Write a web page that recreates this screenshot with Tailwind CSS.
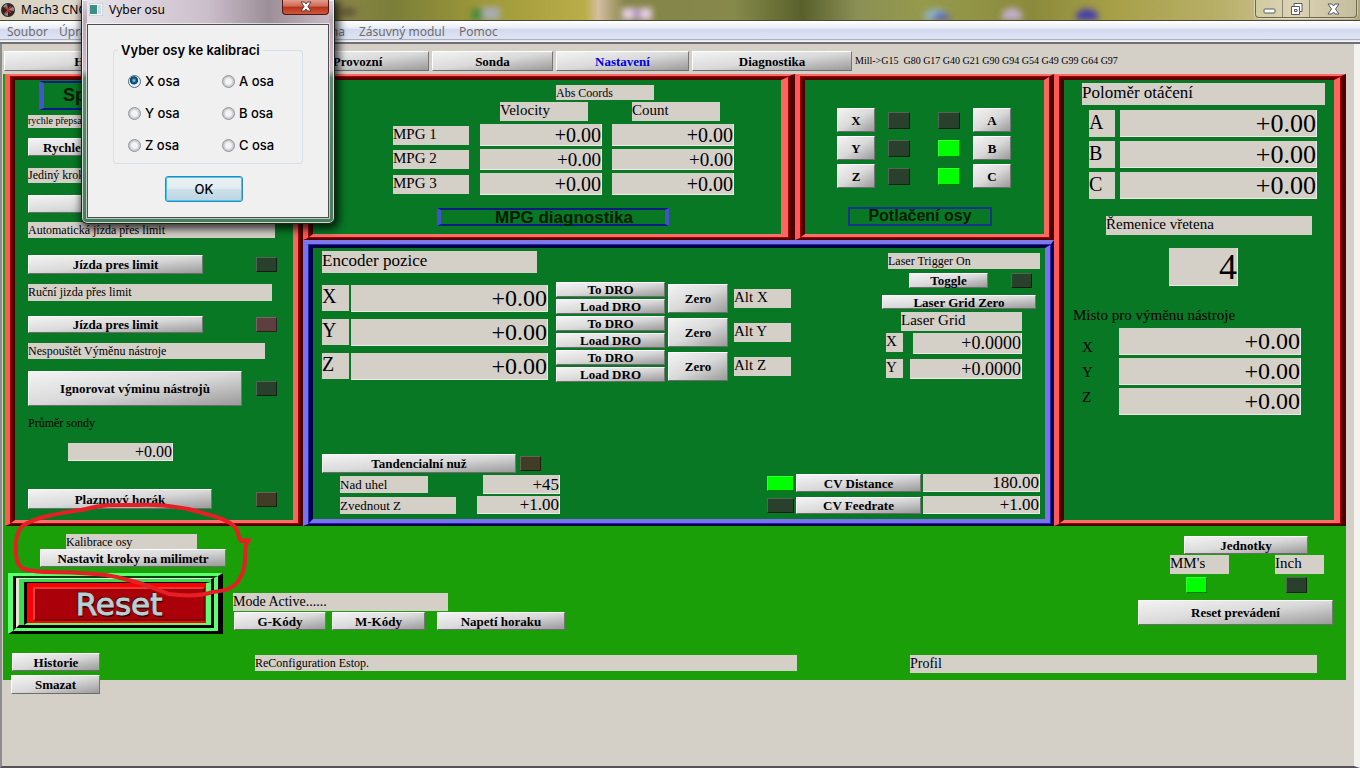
<!DOCTYPE html>
<html lang="cs">
<head>
  <meta charset="UTF-8">
  <meta name="viewport" content="width=device-width, initial-scale=1.0">
  <title>Mach3 CNC</title>
  <script src="https://cdn.jsdelivr.net/npm/@tailwindcss/browser@4"></script>
</head>
<body class="relative min-h-screen flex flex-col overflow-hidden bg-[#d4d0c8] text-black font-['Liberation_Serif',serif]">
  <!-- Title bar -->
  <header class="relative h-[21px] shrink-0 flex items-center overflow-hidden border-b border-[#4a4836] bg-[linear-gradient(90deg,#d6d0bd_0,#e0d9cf_6%,#a59a95_18%,#8a8448_25%,#7b7f38_29%,#a09a3a_36%,#b9ad48_43%,#d5bda0_44%,#858549_46%,#85894a_54%,#59602a_59%,#8a8f55_63%,#969a4c_68%,#8b8a3c_76%,#a7a048_82%,#b9b06a_90%,#cfc49c_95%,#b0a67c_100%)]">
    <svg class="ml-px size-[14px] shrink-0" viewBox="0 0 14 14"><circle cx="7" cy="7" r="7" fill="#2a2626"/><path d="M7 7 2 3.500A6 6 0 0 1 6 1zM7 7l5-3.500A6 6 0 0 1 13 8zM7 7v6a6 6 0 0 1-4-2z" fill="#8d8a86"/><path d="M4 4l6 6M10 3 5 10" stroke="#c22b22" stroke-width="1.500"/></svg>
    <h1 class="ml-[6px] whitespace-nowrap font-['Noto_Sans',sans-serif] text-[12px] leading-none">Mach3 CNC</h1>
    <svg class="absolute inset-y-0 left-[340px] h-[20px] w-[800px] blur-[3px]" viewBox="0 0 800 20">
      <ellipse cx="8" cy="12" rx="9" ry="4" fill="#5c5438"/>
      <rect x="132" y="9" width="9" height="11" fill="#3f8a3c"/><rect x="142" y="7" width="18" height="13" fill="#a8acb4"/>
      <rect x="282" y="8" width="30" height="12" fill="#e6cfe4"/><rect x="294" y="9" width="6" height="11" fill="#a88ab4"/>
      <ellipse cx="596" cy="17" rx="12" ry="8" fill="#8db2cf"/><ellipse cx="602" cy="19" rx="8" ry="6" fill="#5a63bb"/>
      <ellipse cx="672" cy="16" rx="10" ry="8" fill="#c2aed0"/>
      <ellipse cx="747" cy="17" rx="11" ry="8" fill="#443bb0"/>
    </svg>
    <div class="absolute top-0 right-[3px] h-[18px] flex rounded-b-[4px] border border-t-0 border-[#6c6750] bg-white/25 shadow-[0_0_0_1px_rgba(255,255,255,0.4)]">
      <button aria-label="Minimalizovat" class="w-[27px] border-r border-[#8d886d]"><svg class="mx-auto" width="15" height="14" viewBox="0 0 15 14"><rect x="2" y="7" width="11" height="4" rx="1" fill="#fff" stroke="#555a66"/></svg></button>
      <button aria-label="Obnovit" class="w-[27px] border-r border-[#8d886d]"><svg class="mx-auto" width="15" height="14" viewBox="0 0 15 14"><path d="M5 1.500h8v8h-2.500v3H2.500v-8H5z" fill="#fff" stroke="#555a66"/><path d="M5.500 7.500h2.500v2H5.500zM5 4.500h5.500v5" fill="none" stroke="#555a66"/></svg></button>
      <button aria-label="Zavřít" class="w-[46px]"><svg class="mx-auto" width="15" height="14" viewBox="0 0 15 14"><path d="M2 2h4l1.500 2L9 2h4L9.500 7l3.500 5H9L7.500 10 6 12H2l3.500-5z" fill="#fff" stroke="#555a66"/></svg></button>
    </div>
  </header>

  <!-- Menu -->
  <nav class="h-[23px] shrink-0 flex items-center whitespace-nowrap border-b-2 border-[#6f7075] bg-[linear-gradient(#fff_0,#e9edf6_35%,#d3daee_38%,#dfe4f4_85%,#a9aebb_88%,#f4f4f6_94%)] pl-[7px] font-['Noto_Sans',sans-serif] text-[12px] text-[#6d6d6d]">
    <a href="#" class="w-[52px]">Soubor</a>
    <a href="#" class="w-[88px]">Úpravy</a>
    <a href="#" class="w-[90px]">Funkce</a>
    <a href="#" class="w-[108px] text-right">Obsluha</a>
    <a href="#" class="ml-[14px]">Zásuvný modul</a>
    <a href="#" class="ml-[14px]">Pomoc</a>
  </nav>

  <div class="grow flex flex-col border-l-2 border-r-[6px] border-b-2 border-l-[#8c8c8c] border-r-[#f3f2ef] border-b-[#55525c] pr-[8px] [&_button]:border [&_button]:border-t-white [&_button]:border-l-white [&_button]:border-r-[#757575] [&_button]:border-b-[#6c6c6c] [&_button]:bg-linear-to-br [&_button]:from-[#f3f3f3] [&_button]:via-[#dadada] [&_button]:to-[#9b9b9b] [&_button]:font-bold [&_button]:text-[13px] [&_button]:leading-none [&_button]:whitespace-nowrap [&_button]:flex [&_button]:items-center [&_button]:justify-center [&_input]:block [&_input]:min-w-0 [&_input]:bg-[#d4d0c8] [&_input]:pt-px [&_input]:text-right [&_input]:leading-none [&_input]:border-r [&_input]:border-b [&_input]:border-[#eceae6] [&_input]:outline-none [&_label]:block [&_label]:bg-[#d4d0c8] [&_label]:leading-none [&_label]:whitespace-nowrap [&_i]:block [&_i]:shrink-0 [&_i]:border [&_i]:border-t-white/20 [&_i]:border-l-white/20 [&_i]:border-r-black/50 [&_i]:border-b-black/50">
    <!-- Screen tabs -->
    <div class="flex items-center gap-[3px] pt-[7px] pb-[3px] pl-[2px]">
      <button class="h-5 w-[178px]">Hlavní</button>
      <button class="h-5 w-[98px]" aria-label="MDI"></button>
      <button class="h-5 w-[143px]">Provozní</button>
      <button class="h-5 w-[121px]">Sonda</button>
      <button class="h-5 w-[133px]"><span class="text-[#0000e0]">Nastavení</span></button>
      <button class="h-5 w-[160px]">Diagnostika</button>
      <p class="text-[10px] leading-none whitespace-nowrap">Mill-&gt;G15&nbsp; G80 G17 G40 G21 G90 G94 G54 G49 G99 G64 G97</p>
    </div>

    <main class="ml-px bg-[#1b9f08]">
      <div class="grid grid-cols-[298px_minmax(0,1fr)_292px] pl-[2px]">

        <!-- Left panel -->
        <section class="border-t-2 border-l-[5px] border-r-4 border-b-2 border-t-[#ff6a66] border-l-[#fb5a58] border-r-[#4a0000] border-b-[#4a0000] bg-[#a80000] p-px">
          <div class="h-full border-t-[3px] border-l-4 border-r-[5px] border-b-[3px] border-t-[#5a0000] border-l-[#4a0000] border-r-[#fb6562] border-b-[#f4726a] bg-[#087825] pt-px pb-[11px] pl-[13px]">
            <h2 class="ml-[11px] h-[29px] w-[200px] border-2 border-l-[5px] border-[#0a1690] border-l-[#4654cc] pl-[19px] font-['Liberation_Sans',sans-serif] text-[18px] leading-[24px] font-bold text-[#001c02]">Sp</h2>
            <label for="rapid" class="mt-[5px] h-[13px] w-[150px] text-[10px] pt-px">rychle přepsat</label>
            <button id="rapid" class="mt-[10px] h-[18px] w-[175px]"><span class="w-full pl-[14px] text-left">Rychle</span></button>
            <label for="single" class="mt-[12px] h-[15px] w-[150px] text-[12px] pt-px">Jediný krok</label>
            <button id="single" class="mt-[12px] h-[18px] w-[175px]">Jediny krok</button>
            <label for="autolimit" class="mt-[9px] h-4 w-[247px] text-[12px] pt-[2px]">Automatická jízda přes limit</label>
            <div class="mt-[17px] flex items-center gap-[53px]"><button id="autolimit" class="h-[19px] w-[175px]">Jízda pres limit</button><i class="h-[15px] w-[21px] bg-[#28402c]"></i></div>
            <label for="manlimit" class="mt-[10px] h-[17px] w-[244px] text-[12px] pt-[2px]">Ruční jizda přes limit</label>
            <div class="mt-[15px] flex items-center gap-[53px]"><button id="manlimit" class="h-[17px] w-[175px]">Jízda pres limit</button><i class="h-[15px] w-[21px] bg-[#5c3f3e]"></i></div>
            <label for="ignore" class="mt-[10px] h-4 w-[237px] text-[12px] pt-[2px]">Nespouštět Výměnu nástroje</label>
            <div class="mt-[12px] flex items-center gap-[14px]"><button id="ignore" class="h-[35px] w-[214px]">Ignorovat výminu nástrojù</button><i class="h-[15px] w-[21px] bg-[#28402c]"></i></div>
            <p class="mt-[9px] text-[12px] leading-4">Průměr sondy</p>
            <input aria-label="Průměr sondy" value="+0.00" class="mt-[12px] ml-[40px] h-[18px] w-[105px] text-[16px]">
            <div class="mt-[28px] flex items-center gap-[44px]"><button class="h-5 w-[184px]">Plazmový horák</button><i class="h-[15px] w-[21px] bg-[#403c26]"></i></div>
          </div>
        </section>

        <div class="flex flex-col">
          <div class="h-[166px] grid grid-cols-[minmax(0,1fr)_259px]">
            <!-- MPG diagnostics -->
            <section class="border-t-2 border-l-[5px] border-r-[6px] border-b-2 border-t-[#ff6a66] border-l-[#fb5a58] border-r-[#4a0000] border-b-[#5a0000] bg-[#a80000] p-px">
              <div class="h-full border-t-[3px] border-l-4 border-r-[7px] border-b-[3px] border-t-[#5a0000] border-l-[#4a0000] border-r-[#fb6562] border-b-[#f4726a] bg-[#087825] pt-[5px] pl-[80px]">
                <h3 class="ml-[163px] h-[15px] w-[98px] bg-[#d4d0c8] text-[12px] leading-4">Abs Coords</h3>
                <div class="mt-[2px] ml-[107px] flex gap-[44px] text-[15px] leading-4">
                  <p class="h-[19px] w-[88px] bg-[#d4d0c8]">Velocity</p>
                  <p class="h-[19px] w-[88px] bg-[#d4d0c8]">Count</p>
                </div>
                <div class="mt-[3px] grid grid-cols-[77px_122px_122px] items-center gap-x-[10px] gap-y-[3px] text-[15px]">
                  <label for="mpg1" class="h-[19px] w-[76px] pt-px">MPG 1</label><input id="mpg1" value="+0.00" class="h-[22px] text-[20px]"><input aria-label="MPG 1 count" value="+0.00" class="h-[22px] text-[20px]">
                  <label for="mpg2" class="h-[19px] w-[76px] pt-px">MPG 2</label><input id="mpg2" value="+0.00" class="h-[21px] text-[19px]"><input aria-label="MPG 2 count" value="+0.00" class="h-[21px] text-[19px]">
                  <label for="mpg3" class="h-[19px] w-[76px] pt-px">MPG 3</label><input id="mpg3" value="+0.00" class="h-[22px] text-[20px]"><input aria-label="MPG 3 count" value="+0.00" class="h-[22px] text-[20px]">
                </div>
                <h2 class="mt-[13px] ml-[44px] h-[18px] w-[232px] border-2 border-x-[4px] border-[#0b1c86] border-x-[#4452cf] pl-[22px] text-center font-['Liberation_Sans',sans-serif] text-[17px] leading-[15px] font-bold text-[#001c02]">MPG diagnostika</h2>
              </div>
            </section>

            <!-- Axis inhibit -->
            <section class="border-t-2 border-l-[5px] border-r-4 border-b-2 border-t-[#ff6a66] border-l-[#fb5a58] border-r-[#4a0000] border-b-[#5a0000] bg-[#a80000] p-px">
              <div class="h-full border-t-[3px] border-l-4 border-r-[5px] border-b-[3px] border-t-[#5a0000] border-l-[#4a0000] border-r-[#fb6562] border-b-[#f4726a] bg-[#087825] pt-[28px] pl-[32px]">
                <div class="flex gap-[28px]">
                  <div class="grid grid-cols-[38px_22px] items-center gap-x-[13px] gap-y-1">
                    <button class="h-6">X</button><i class="h-[17px] bg-[#28402c]"></i>
                    <button class="h-6">Y</button><i class="h-[17px] bg-[#28402c]"></i>
                    <button class="h-6">Z</button><i class="h-[17px] bg-[#28402c]"></i>
                  </div>
                  <div class="grid grid-cols-[22px_38px] items-center gap-x-[13px] gap-y-1">
                    <i class="h-[17px] bg-[#28402c]"></i><button class="h-6">A</button>
                    <i class="h-[17px] bg-[#00ff00]"></i><button class="h-6">B</button>
                    <i class="h-[17px] bg-[#00ff00]"></i><button class="h-6">C</button>
                  </div>
                </div>
                <h2 class="mt-[19px] ml-[11px] h-[19px] w-[144px] border-2 border-[#17338c] text-center font-['Liberation_Sans',sans-serif] text-[16px] leading-[14px] font-bold text-[#001c02]">Potlačení osy</h2>
              </div>
            </section>
          </div>

          <!-- Encoder positions -->
          <section class="grow border-t-4 border-l-[5px] border-r-[3px] border-b-2 border-t-[#7e78ee] border-l-[#7872ee] border-r-[#000050] border-b-[#000048] bg-[#2a22a8] p-px">
            <div class="h-full flex flex-col justify-between border-t-[3px] border-l-4 border-r-[5px] border-b-4 border-t-[#000040] border-l-[#000048] border-r-[#7872ee] border-b-[#7872ee] bg-[#087825] pt-[3px] pb-[5px] pl-[9px] pr-[5px]">
              <div class="flex justify-between">
                <div>
                  <h2 class="h-[22px] w-[215px] bg-[#d4d0c8] text-[17px] leading-[20px]">Encoder pozice</h2>
                  <div class="mt-[9px] flex flex-col gap-[2px]">
                    <div class="flex items-center">
                      <label for="encx" class="h-[26px] w-[27px] pt-px text-[20px]">X</label>
                      <input id="encx" value="+0.00" class="ml-[2px] h-[27px] w-[197px] text-[24px]">
                      <div class="ml-[8px] grid gap-[2px]"><button class="h-[15px] w-[109px]">To DRO</button><button class="h-[15px] w-[109px]">Load DRO</button></div>
                      <button class="ml-[3px] h-[29px] w-[60px]">Zero</button>
                      <p class="ml-[6px] h-[19px] w-[57px] bg-[#d4d0c8] text-[15px] leading-4">Alt X</p>
                    </div>
                    <div class="flex items-center">
                      <label for="ency" class="h-[26px] w-[27px] pt-px text-[20px]">Y</label>
                      <input id="ency" value="+0.00" class="ml-[2px] h-[27px] w-[197px] text-[24px]">
                      <div class="ml-[8px] grid gap-[2px]"><button class="h-[15px] w-[109px]">To DRO</button><button class="h-[15px] w-[109px]">Load DRO</button></div>
                      <button class="ml-[3px] h-[29px] w-[60px]">Zero</button>
                      <p class="ml-[6px] h-[19px] w-[57px] bg-[#d4d0c8] text-[15px] leading-4">Alt Y</p>
                    </div>
                    <div class="flex items-center">
                      <label for="encz" class="h-[26px] w-[27px] pt-px text-[20px]">Z</label>
                      <input id="encz" value="+0.00" class="ml-[2px] h-[27px] w-[197px] text-[24px]">
                      <div class="ml-[8px] grid gap-[2px]"><button class="h-[15px] w-[109px]">To DRO</button><button class="h-[15px] w-[109px]">Load DRO</button></div>
                      <button class="ml-[3px] h-[29px] w-[60px]">Zero</button>
                      <p class="ml-[6px] h-[19px] w-[57px] bg-[#d4d0c8] text-[15px] leading-4">Alt Z</p>
                    </div>
                  </div>
                </div>
                <div class="flex flex-col items-end">
                  <p class="mt-[2px] h-4 w-[152px] bg-[#d4d0c8] text-[12px] leading-4">Laser Trigger On</p>
                  <div class="mt-1 mr-[8px] flex gap-[23px]"><button class="h-[15px] w-[79px]">Toggle</button><i class="h-[15px] w-[21px] bg-[#28402c]"></i></div>
                  <button class="mt-[7px] mr-1 h-[14px] w-[154px]">Laser Grid Zero</button>
                  <p class="mt-[3px] mr-[18px] h-[19px] w-[121px] bg-[#d4d0c8] text-[15px] leading-4">Laser Grid</p>
                  <div class="mt-[2px] mr-[18px] flex gap-[10px]"><label for="lasx" class="h-[19px] w-[17px] pt-px text-[15px]">X</label><input id="lasx" value="+0.0000" class="h-[21px] w-[109px] text-[18px]"></div>
                  <div class="mt-[5px] mr-[18px] flex gap-[7px]"><label for="lasy" class="h-[19px] w-[17px] pt-px text-[15px]">Y</label><input id="lasy" value="+0.0000" class="h-[20px] w-[112px] text-[18px]"></div>
                </div>
              </div>

              <div class="flex items-end justify-between">
                <div>
                  <div class="flex items-center gap-1"><button class="h-[19px] w-[194px]">Tandencialní nuž</button><i class="h-[15px] w-[21px] bg-[#403c26]"></i></div>
                  <div class="mt-[2px] ml-[18px] flex w-[220px] items-center justify-between"><label for="angle" class="h-[17px] w-[88px] pt-[2px] text-[13px]">Nad uhel</label><input id="angle" value="+45" class="h-[19px] w-[77px] text-[17px]"></div>
                  <div class="mt-[2px] ml-[18px] flex w-[220px] items-center justify-between"><label for="liftz" class="h-[17px] w-[116px] pt-[2px] text-[13px]">Zvednout Z</label><input id="liftz" value="+1.00" class="h-[18px] w-[83px] text-[17px]"></div>
                </div>
                <div class="grid grid-cols-[27px_125px_117px] items-center gap-x-[2px] gap-y-[4px]">
                  <i class="h-[15px] bg-[#00ff00]"></i><button class="h-[18px]">CV Distance</button><input aria-label="CV Distance" value="180.00" class="h-[18px] text-[17px]">
                  <i class="h-[15px] bg-[#28402c]"></i><button class="h-[17px]">CV Feedrate</button><input aria-label="CV Feedrate" value="+1.00" class="h-[18px] text-[17px]">
                </div>
              </div>
            </div>
          </section>
        </div>

        <!-- Right panel -->
        <section class="border-t-2 border-l-[5px] border-r-[5px] border-b-2 border-t-[#ff6a66] border-l-[#fb5a58] border-r-[#4a0000] border-b-[#4a0000] bg-[#a80000] p-px">
          <div class="h-full border-t-[3px] border-l-4 border-r-[6px] border-b-[3px] border-t-[#5a0000] border-l-[#4a0000] border-r-[#fb6562] border-b-[#f4726a] bg-[#087825] pt-[3px] pl-[9px]">
            <h2 class="ml-[9px] h-[22px] w-[243px] bg-[#d4d0c8] text-[17px] leading-[20px]">Poloměr otáčení</h2>
            <div class="mt-[5px] ml-4 grid grid-cols-[26px_197px] gap-x-[5px] gap-y-1">
              <label for="rada" class="h-[27px] pt-[2px] text-[20px]">A</label><input id="rada" value="+0.00" class="h-[27px] text-[26px]">
              <label for="radb" class="h-[27px] pt-[2px] text-[20px]">B</label><input id="radb" value="+0.00" class="h-[27px] text-[26px]">
              <label for="radc" class="h-[27px] pt-[2px] text-[20px]">C</label><input id="radc" value="+0.00" class="h-[27px] text-[26px]">
            </div>
            <label for="pulley" class="mt-[17px] ml-[33px] h-[19px] w-[206px] pt-px text-[15px]">Řemenice vřetena</label>
            <input id="pulley" value="4" class="mt-[13px] ml-[96px] h-[38px] w-[69px] text-[36px]">
            <h3 class="mt-[20px] text-[15px] leading-[18px]">Misto pro výměnu nástroje</h3>
            <div class="mt-1 ml-[9px] flex">
              <div class="w-[37px] pt-[7px] text-[15px] leading-[25px]"><p>X</p><p>Y</p><p>Z</p></div>
              <div class="grid gap-[3px]">
                <input aria-label="X" value="+0.00" class="h-[27px] w-[182px] text-[24px]">
                <input aria-label="Y" value="+0.00" class="h-[27px] w-[182px] text-[24px]">
                <input aria-label="Z" value="+0.00" class="h-[27px] w-[182px] text-[24px]">
              </div>
            </div>
          </div>
        </section>
      </div>

      <!-- Bottom strip -->
      <div class="flex h-[154px] items-start pl-[5px] pr-[13px]">
        <div class="w-[225px] shrink-0 pt-2">
          <label for="calib" class="ml-[58px] h-[15px] w-[131px] pt-[2px] text-[12px]">Kalibrace osy</label>
          <button id="calib" class="ml-[32px] h-[18px] w-[186px]">Nastavit kroky na milimetr</button>
          <!-- each nested box is one ridge of the Reset frame -->
          <button class="mt-[6px] block! h-[61px] w-[215px] border-0! bg-none!">
            <div class="h-full border-t-[3px] border-l-[5px] border-r-[5px] border-b-[3px] border-t-[#5cff70] border-l-[#5cff70] border-r-black border-b-black">
              <div class="h-full border-t-2 border-l-[3px] border-r-4 border-b-[3px] border-t-[#063f0c] border-l-black border-r-[#5cff70] border-b-[#5cff70]">
                <div class="h-full border-t border-l-[3px] border-r-[3px] border-b-[3px] border-t-[#e9e4d6] border-l-[#e9e4d6] border-r-black border-b-black">
                  <div class="h-full border-t-[3px] border-l-[5px] border-t-[#35e052] border-l-[#35e052]">
                    <div class="h-full border-t border-l-[3px] border-r-[5px] border-b-2 border-t-black border-l-black border-r-[#5cff70] border-b-[#5cff70]">
                      <div class="h-full bg-[#ff0000] pt-1 pr-px pb-[2px] pl-[6px]">
                        <div class="flex h-full items-center justify-center border-2 border-t-[#e03a3a] border-l-[#d84848] border-r-[#760006] border-b-[#760006] bg-[#a90009] font-['DejaVu_Sans',sans-serif] text-[31px] leading-none font-normal text-[#b9cfd2] [-webkit-text-stroke:1px_#b9cfd2] [text-shadow:1px_2px_1px_#2a0000,-1px_-1px_1px_#3a0000]">Reset</div>
                      </div>
                    </div>
                  </div>
                </div>
              </div>
            </div>
          </button>
          <button class="mt-[19px] ml-1 h-[18px] w-[88px]">Historie</button>
          <button class="mt-1 ml-[3px] h-[19px] w-[89px]">Smazat</button>
        </div>
        <div class="pt-[67px]">
          <p class="h-[18px] w-[215px] bg-[#d4d0c8] text-[14px] leading-[17px]">Mode Active......</p>
          <div class="mt-px ml-px flex"><button class="h-[18px] w-[92px]">G-Kódy</button><button class="ml-[6px] h-[18px] w-[93px]">M-Kódy</button><button class="ml-[12px] h-[18px] w-[128px]">Napetí horaku</button></div>
          <p class="mt-[25px] ml-[22px] h-4 w-[542px] bg-[#d4d0c8] text-[12px] leading-4">ReConfiguration Estop.</p>
        </div>
        <div class="ml-auto flex flex-col items-end pt-[10px]">
          <button class="mr-[25px] h-[18px] w-[124px]">Jednotky</button>
          <div class="mt-px mr-[9px] flex gap-[46px] text-[15px] leading-[17px]">
            <div><p class="h-[19px] w-[59px] bg-[#d4d0c8]">MM's</p><i class="mt-[3px] ml-4 h-4 w-[21px] bg-[#00ff00]"></i></div>
            <div><p class="h-[19px] w-[49px] bg-[#d4d0c8]">Inch</p><i class="mt-[3px] ml-[11px] h-4 w-[21px] bg-[#28402c]"></i></div>
          </div>
          <button class="mt-[7px] h-[25px] w-[195px]">Reset prevádení</button>
          <p class="mt-[30px] mr-4 h-[18px] w-[407px] bg-[#d4d0c8] text-[14px] leading-[17px]">Profil</p>
        </div>
      </div>
    </main>
  </div>

  <!-- Axis selection dialog -->
  <div role="dialog" aria-labelledby="dlg-title" class="absolute top-0 left-[81px] w-[254px] rounded-b-[6px] border border-t-0 border-[#1e2420] bg-[linear-gradient(#d9cfd6_0,#b9aab6_20px,#cbbcc8_70px,#5f8a6c_78px,#4a7d5a_100%)] px-[5px] pb-[5px] font-['Noto_Sans',sans-serif] shadow-[2px_3px_9px_2px_rgba(0,0,0,0.75),inset_0_0_0_1px_rgba(255,255,255,0.7)]">
    <div class="flex h-6 items-start bg-[linear-gradient(90deg,#e9e4ea,#cbbecb_50%,#9c8f98_75%,#c7b9c3)]">
      <svg class="mt-[3px] ml-[2px]" width="14" height="13" viewBox="0 0 14 13"><rect width="14" height="13" fill="#f4f8fa" stroke="#a8b4bc"/><rect x="1" y="2" width="7" height="9" fill="#3c8f86"/><rect x="9" y="2" width="3" height="9" fill="#c9dbe4"/></svg>
      <h2 id="dlg-title" class="ml-[6px] mt-1 text-[12px] leading-none">Vyber osu</h2>
      <button aria-label="Zavřít" class="ml-auto h-[15px] w-[47px] rounded-b-[4px] border border-t-0 border-[#4e1710] bg-[linear-gradient(#e0a090_0,#cf6650_45%,#b5321c_50%,#d2583a)]"><svg class="mx-auto -mt-px" width="14" height="12" viewBox="0 0 14 12"><path d="M2 1h3.500L7 3l1.500-2H12L9 5.500l3 4.500H8.500L7 8l-1.500 2H2l3-4.500z" fill="#fff" stroke="#5c3a38"/></svg></button>
    </div>
    <div class="border border-[#4b4f50] bg-[#f0f0f0] px-[25px] pt-[17px] pb-[15px] font-['Inter',sans-serif] text-[13px] leading-none shadow-[0_0_0_1px_rgba(255,255,255,0.6)]">
      <fieldset class="h-[122px] w-[190px] rounded-[3px] border border-[#d5dfe5] px-[14px]">
        <legend class="-ml-[10px] px-[3px] text-[13px] leading-4 font-semibold">Vyber osy ke kalibraci</legend>
        <div class="mt-[15px] grid grid-cols-[94px_66px] gap-y-[16px] font-medium [&_label]:flex [&_label]:h-4 [&_label]:items-center [&_label]:gap-[4px] [&_input]:m-0 [&_input]:size-[13px] [&_input]:appearance-none [&_input]:rounded-full [&_input]:border [&_input]:border-[#8e9498] [&_input]:bg-[radial-gradient(#f4f4f4_35%,#c9cdd0_60%)] [&_input]:checked:border-[#456a82] [&_input]:checked:bg-[radial-gradient(circle_at_45%_40%,#8fd8f4_0,#15608e_25%,#0c3c60_42%,#e8f2f6_50%)]">
          <label><input type="radio" name="axis" checked>X osa</label>
          <label><input type="radio" name="axis">A osa</label>
          <label><input type="radio" name="axis">Y osa</label>
          <label><input type="radio" name="axis">B osa</label>
          <label><input type="radio" name="axis">Z osa</label>
          <label><input type="radio" name="axis">C osa</label>
        </div>
      </fieldset>
      <button class="ml-[52px] mt-[12px] block h-[26px] w-[78px] rounded-[3px] border border-[#2f87b5] bg-[linear-gradient(#edf3f7_0,#e0ebf2_48%,#cddfe9_52%,#bcd6e4)] font-medium shadow-[inset_0_0_0_1px_#48c8f0]">OK</button>
    </div>
  </div>

  <!-- Hand-drawn marker round the calibration button -->
  <svg class="pointer-events-none absolute top-[495px] left-0" width="260" height="110" viewBox="0 495 260 110" fill="none" stroke="#e81e25" stroke-width="4" stroke-linecap="round" stroke-linejoin="round"><path d="M24 525C40 515 66 513 86 509C104 504 120 505 138 505C158 504 172 506 188 509C205 514 224 517 234 526C240 532 237 537 241 541L249 540L246 545C244 556 247 568 240 578C235 589 224 591 213 592C201 596 184 596 169 594C154 589 144 583 128 580C112 575 100 574 80 573C60 571 33 574 22 568C15 563 16 553 16 542C17 533 19 528 24 525"/></svg>
</body>
</html>
